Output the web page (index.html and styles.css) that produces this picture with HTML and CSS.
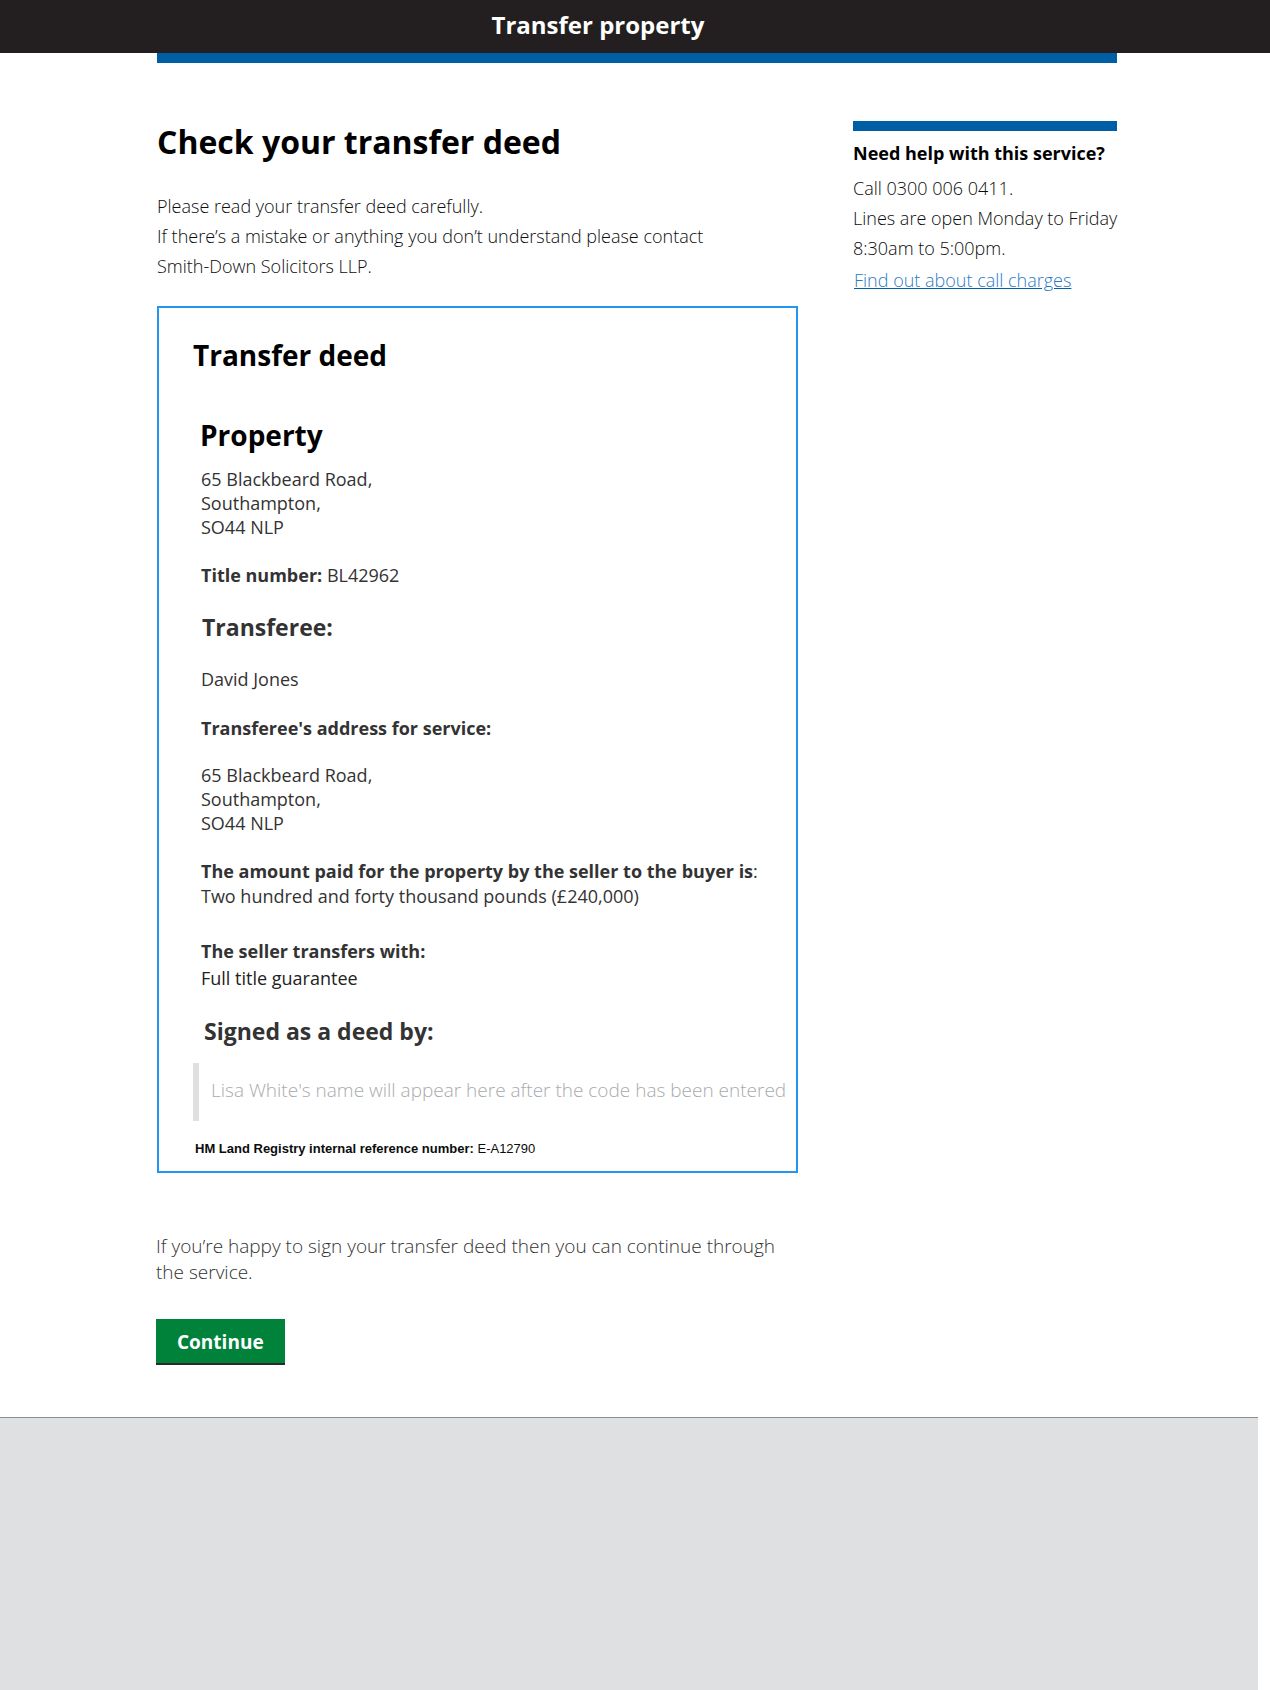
FILE: index.html
```html
<!DOCTYPE html>
<html lang="en">
<head>
<meta charset="utf-8">
<title>Check your transfer deed</title>
<link rel="stylesheet" href="styles.css">
</head>
<body>
<header class="site-header">
  <div class="site-title">Transfer property</div>
</header>
<div class="container">
  <div class="phase-bar"></div>
  <div class="layout">
    <main class="main-col">
      <h1 class="page-title">Check your transfer deed</h1>
      <p class="intro">Please read your transfer deed carefully.<br>If there’s a mistake or anything you don’t understand please contact<br>Smith-Down Solicitors LLP.</p>

      <section class="deed">
        <h2 class="deed-title">Transfer deed</h2>
        <h2 class="deed-heading">Property</h2>
        <p class="deed-address">65 Blackbeard Road,<br>Southampton,<br>SO44 NLP</p>
        <p class="deed-title-number"><strong>Title number:</strong> BL42962</p>

        <h3 class="deed-sub">Transferee:</h3>
        <p class="deed-name">David Jones</p>
        <p class="deed-label"><strong>Transferee's address for service:</strong></p>
        <p class="deed-address2">65 Blackbeard Road,<br>Southampton,<br>SO44 NLP</p>
        <p class="deed-amount"><strong>The amount paid for the property by the seller to the buyer is</strong>:<br>Two hundred and forty thousand pounds (£240,000)</p>
        <p class="deed-seller"><strong>The seller transfers with:</strong></p>
        <p class="deed-guarantee">Full title guarantee</p>

        <h3 class="deed-sub deed-signed">Signed as a deed by:</h3>
        <div class="signature">Lisa White's name will appear here after the code has been entered</div>
        <p class="reference"><strong>HM Land Registry internal reference number:</strong> E-A12790</p>
      </section>

      <p class="outro">If you’re happy to sign your transfer deed then you can continue through<br>the service.</p>
      <a class="button" href="#">Continue</a>
    </main>
    <aside class="sidebar">
      <div class="sidebar-bar"></div>
      <h2 class="sidebar-title">Need help with this service?</h2>
      <p class="sidebar-text">Call 0300 006 0411.<br>Lines are open Monday to Friday<br>8:30am to 5:00pm.</p>
      <a class="sidebar-link" href="#">Find out about call charges</a>
    </aside>
  </div>
</div>
<footer class="site-footer"></footer>
</body>
</html>
```

FILE: styles.css
```css
html, body {
  margin: 0;
  padding: 0;
  background: #fff;
}
body {
  font-family: "Open Sans", "Liberation Sans", sans-serif;
  color: #0b0c0c;
  min-height: 1690px;
  display: flex;
  flex-direction: column;
}
p, h1, h2, h3 {
  margin: 0;
}

.site-header {
  background: #231f20;
  height: 53px;
  box-sizing: border-box;
  padding: 0 74px 4px 0;
  text-align: center;
}
.site-title {
  color: #fff;
  font-weight: 700;
  font-size: 24px;
  line-height: 49px;
}

.container {
  width: 960px;
  margin-left: calc(50% - 478px);
}
.phase-bar {
  height: 10px;
  background: #005ea5;
}
.layout {
  display: flex;
  justify-content: space-between;
}
.main-col {
  width: 641px;
  padding-top: 59px;
}
.page-title {
  font-size: 32px;
  line-height: 40px;
  font-weight: 700;
  color: #000;
}
.intro {
  margin-top: 29px;
  font-size: 18px;
  line-height: 30px;
  font-weight: 300;
  color: #0b0c0c;
  white-space: nowrap;
}

.deed {
  margin-top: 25px;
  border: 2px solid #2196f3;
  padding: 31px 10px 14px 34px;
  color: #333;
}
.deed-title {
  font-size: 28px;
  line-height: 32px;
  font-weight: 700;
  color: #000;
}
.deed-heading {
  margin-top: 48px;
  margin-left: 7px;
  font-size: 28px;
  line-height: 32px;
  font-weight: 700;
  color: #000;
}
.deed p {
  font-size: 18px;
  line-height: 24px;
  margin-left: 8px;
}
.deed strong {
  font-weight: 700;
}
.deed-address {
  margin-top: 16px;
}
.deed-title-number {
  margin-top: 24px;
}
.deed-sub {
  margin-top: 25px;
  margin-left: 9px;
  font-size: 23px;
  line-height: 30px;
  font-weight: 700;
  color: #333;
}
.deed-name {
  margin-top: 25px;
}
.deed-label {
  margin-top: 25px;
}
.deed-address2 {
  margin-top: 23px;
}
.deed .deed-amount {
  margin-top: 24px;
  line-height: 25px;
}
.deed-seller {
  margin-top: 30px;
}
.deed .deed-guarantee {
  margin-top: 3px;
  color: #222;
}
.deed-signed {
  margin-left: 11px;
  margin-top: 26px;
}
.signature {
  margin-top: 17px;
  border-left: 6px solid #dee0e2;
  padding: 12px 0 16px 12px;
  font-size: 19px;
  line-height: 30px;
  font-weight: 300;
  color: #a8abad;
  white-space: nowrap;
}
.deed .reference {
  margin-top: 20px;
  margin-left: 2px;
  font-family: "Liberation Sans", Arial, sans-serif;
  font-size: 13px;
  line-height: 16px;
  color: #0b0c0c;
}

.outro {
  margin-top: 60px;
  margin-left: -1px;
  font-size: 19px;
  line-height: 26px;
  font-weight: 300;
  color: #333;
  white-space: nowrap;
}
.button {
  display: inline-block;
  margin-top: 34px;
  margin-left: -1px;
  background: #00823b;
  color: #fff;
  font-weight: 700;
  font-size: 19px;
  line-height: 24px;
  padding: 11px 21px 9px 21px;
  box-shadow: 0 2px 0 #2a2a2a;
  text-decoration: none;
}

.sidebar {
  width: 264px;
  padding-top: 58px;
}
.sidebar-bar {
  height: 10px;
  background: #005ea5;
}
.sidebar-title {
  margin-top: 10px;
  font-size: 18px;
  line-height: 25px;
  font-weight: 700;
  color: #000;
}
.sidebar-text {
  margin-top: 7px;
  font-size: 18px;
  line-height: 30px;
  font-weight: 300;
  color: #0b0c0c;
  white-space: nowrap;
}
.sidebar-link {
  display: inline-block;
  margin-top: 2px;
  margin-left: 1px;
  font-size: 18px;
  line-height: 30px;
  font-weight: 300;
  color: #2b7bc4;
  text-decoration: underline;
  text-decoration-color: #005ea5;
}

.site-footer {
  margin-top: 54px;
  margin-right: 12px;
  flex: 1;
  background: #dee0e2;
  border-top: 1px solid #8a8f92;
}
```
